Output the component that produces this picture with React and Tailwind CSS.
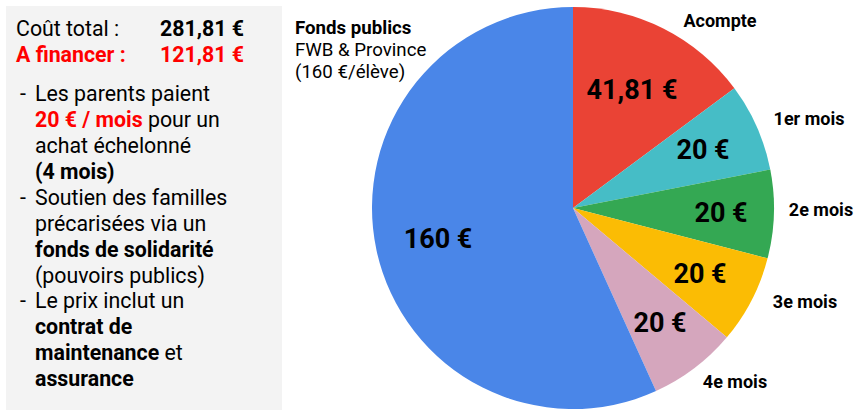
import React from "react";

const CX = 573;
const CY = 208;
const R = 201;

const slices = [
  { value: 41.81, color: "#ea4335" },
  { value: 20, color: "#46bdc6" },
  { value: 20, color: "#34a853" },
  { value: 20, color: "#fbbc04" },
  { value: 20, color: "#d5a6bd" },
  { value: 160, color: "#4a86e8" },
];

function pt(deg) {
  const a = (deg * Math.PI) / 180;
  return [CX + R * Math.sin(a), CY - R * Math.cos(a)];
}

function Pie() {
  const total = slices.reduce((s, x) => s + x.value, 0);
  let start = 0;
  const paths = slices.map((s, i) => {
    const sweep = (s.value / total) * 360;
    const end = start + sweep;
    const [x1, y1] = pt(start);
    const [x2, y2] = pt(end);
    const large = sweep > 180 ? 1 : 0;
    const d = `M ${CX} ${CY} L ${x1} ${y1} A ${R} ${R} 0 ${large} 1 ${x2} ${y2} Z`;
    start = end;
    return <path key={i} d={d} fill={s.color} />;
  });

  const inner = [
    { t: "41,81 €", x: 632, y: 98.5 },
    { t: "20 €", x: 703, y: 159 },
    { t: "20 €", x: 721, y: 222 },
    { t: "20 €", x: 700, y: 283 },
    { t: "20 €", x: 660, y: 332 },
    { t: "160 €", x: 438, y: 248 },
  ];
  const outer = [
    { t: "Acompte", x: 720, y: 27 },
    { t: "1er mois", x: 809, y: 125 },
    { t: "2e mois", x: 821, y: 216 },
    { t: "3e mois", x: 805, y: 308 },
    { t: "4e mois", x: 735, y: 388 },
  ];

  return (
    <svg
      className="block shrink-0"
      width="579"
      height="415"
      viewBox="282 0 579 415"
      style={{ fontFamily: "Roboto, 'Liberation Sans', sans-serif" }}
    >
      {paths}
      {inner.map((l, i) => (
        <text key={i} x={l.x} y={l.y} textAnchor="middle" fontSize="27" fontWeight="700" fill="#000">
          {l.t}
        </text>
      ))}
      {outer.map((l, i) => (
        <text key={i} x={l.x} y={l.y} textAnchor="middle" fontSize="18" fontWeight="700" fill="#000">
          {l.t}
        </text>
      ))}
      <text x="295" y="34" fontSize="18.67" fontWeight="700" fill="#000">Fonds publics</text>
      <text x="295" y="56" fontSize="18.67" fill="#000">FWB &amp; Province</text>
      <text x="295" y="78" fontSize="18.67" fill="#000">(160 €/élève)</text>
    </svg>
  );
}

function Bullet({ children }) {
  return (
    <div className="flex">
      <span className="w-[19px] shrink-0 pl-[4px]">-</span>
      <div>{children}</div>
    </div>
  );
}

export default function App() {
  return (
    <div
      className="flex w-[861px] h-[415px] bg-white text-black overflow-hidden"
      style={{ fontFamily: "Roboto, 'Liberation Sans', sans-serif" }}
    >
      <div className="mt-[6px] ml-[6px] w-[276px] h-[404px] shrink-0 bg-[#f3f3f3] pl-[10px] pt-[10px] text-[21.33px] leading-[25.6px]">
        <div className="grid grid-cols-[144px_1fr]">
          <div>Coût total :</div>
          <div className="font-bold">281,81 €</div>
          <div className="font-bold text-[#ff0000]">A financer :</div>
          <div className="font-bold text-[#ff0000]">121,81 €</div>
        </div>
        <div className="mt-[14px] leading-[25.9px]">
          <Bullet>
            Les parents paient
            <br />
            <span className="font-bold text-[#ff0000]">20 € / mois</span> pour un
            <br />
            achat échelonné
            <br />
            <span className="font-bold">(4 mois)</span>
          </Bullet>
          <Bullet>
            Soutien des familles
            <br />
            précarisées via un
            <br />
            <span className="font-bold">fonds de solidarité</span>
            <br />
            (pouvoirs publics)
          </Bullet>
          <Bullet>
            Le prix inclut un
            <br />
            <span className="font-bold">contrat de</span>
            <br />
            <span className="font-bold">maintenance</span> et
            <br />
            <span className="font-bold">assurance</span>
          </Bullet>
        </div>
      </div>
      <Pie />
    </div>
  );
}
